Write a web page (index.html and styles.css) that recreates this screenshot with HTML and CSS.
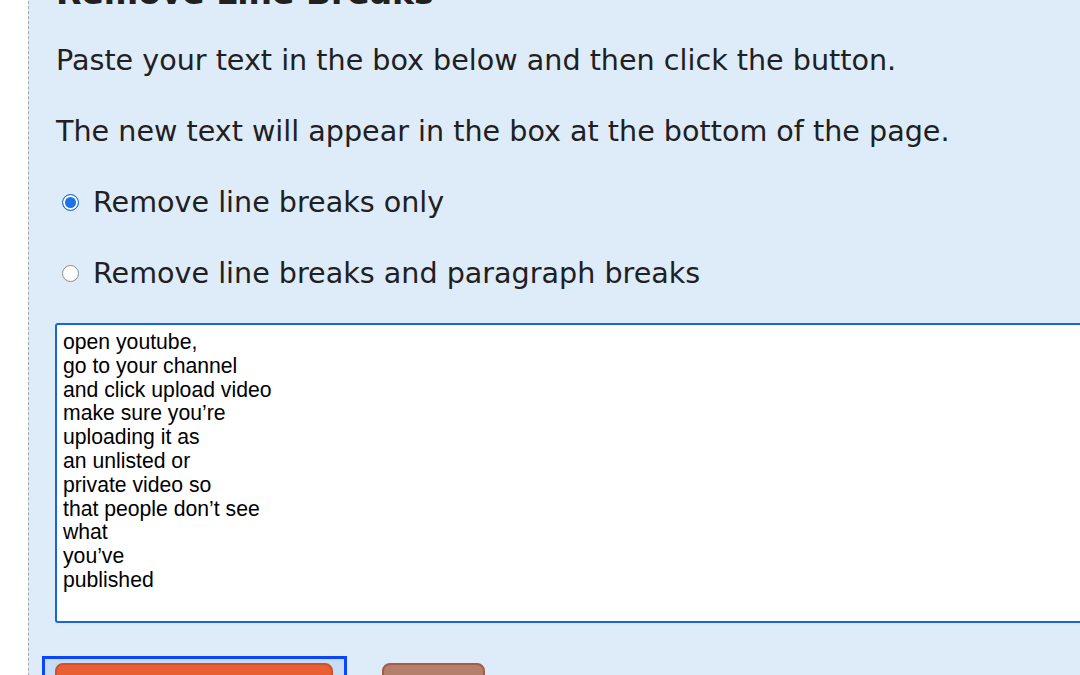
FILE: index.html
```html
<!DOCTYPE html>
<html>
<head>
<meta charset="utf-8">
<link rel="stylesheet" href="styles.css">
</head>
<body>
<div class="page">
  <div class="panel">
    <h1 class="title">Remove Line Breaks</h1>
    <p class="para">Paste your text in the box below and then click the button.</p>
    <p class="para">The new text will appear in the box at the bottom of the page.</p>
    <label class="option"><span class="radio radio-on"></span>Remove line breaks only</label>
    <label class="option"><span class="radio"></span>Remove line breaks and paragraph breaks</label>
    <div class="textbox">open youtube,
go to your channel
and click upload video
make sure you’re
uploading it as
an unlisted or
private video so
that people don’t see
what
you’ve
published</div>
    <div class="buttons">
      <div class="focus-ring"><div class="btn btn-main"></div></div>
      <div class="btn btn-alt"></div>
    </div>
  </div>
</div>
</body>
</html>
```

FILE: styles.css
```css
html, body {
  margin: 0;
  padding: 0;
  background: #ffffff;
  overflow: hidden;
}
.page {
  width: 1080px;
  height: 675px;
  overflow: hidden;
  padding-left: 28px;
  box-sizing: border-box;
}
.panel {
  background: #deebf9;
  border-left: 1px dashed #a9a9a9;
  padding: 0 0 0 27px;
  margin-top: -29px;
  height: 760px;
  font-family: "DejaVu Sans", sans-serif;
  color: #202020;
}
.title {
  margin: 0;
  font-size: 33px;
  line-height: 44px;
  font-weight: bold;
  color: #202020;
}
.para {
  margin: 23px 0 0 0;
  font-size: 28.6px;
  line-height: 44px;
}
.para + .para {
  margin-top: 27px;
}
.option {
  display: flex;
  align-items: center;
  margin-top: 27px;
  font-size: 28.6px;
  line-height: 44px;
}
.radio {
  width: 15px;
  height: 15px;
  border-radius: 50%;
  border: 1px solid #8a8a8a;
  background: #ffffff;
  margin: 0 14px 0 6px;
  box-sizing: content-box;
}
.radio-on {
  border: 1px solid #1a73e8;
  background: #1a73e8;
  box-shadow: inset 0 0 0 2px #ffffff;
}
.textbox {
  margin-top: 28px;
  margin-left: -1px;
  width: 1100px;
  height: 300px;
  box-sizing: border-box;
  border: 2px solid #1766dd;
  border-radius: 3px;
  background: #ffffff;
  padding: 5px 6px;
  font-family: "Liberation Sans", Arial, sans-serif;
  font-size: 21.2px;
  line-height: 23.8px;
  color: #000000;
  white-space: pre;
}
.buttons {
  display: flex;
  align-items: flex-start;
  margin-top: 33px;
  margin-left: -14px;
  gap: 35px;
}
.focus-ring {
  border: 3px solid #0a45ff;
  background: #c9dcf6;
  padding: 4px 11px 0 10px;
}
.btn {
  height: 40px;
  border-radius: 8px;
  box-sizing: border-box;
}
.btn-main {
  width: 278px;
  background: #e95f32;
  border: 2px solid #d0502a;
}
.btn-alt {
  margin-top: 7px;
  width: 103px;
  background: #b47f6b;
  border: 2px solid #a85a43;
}
```
